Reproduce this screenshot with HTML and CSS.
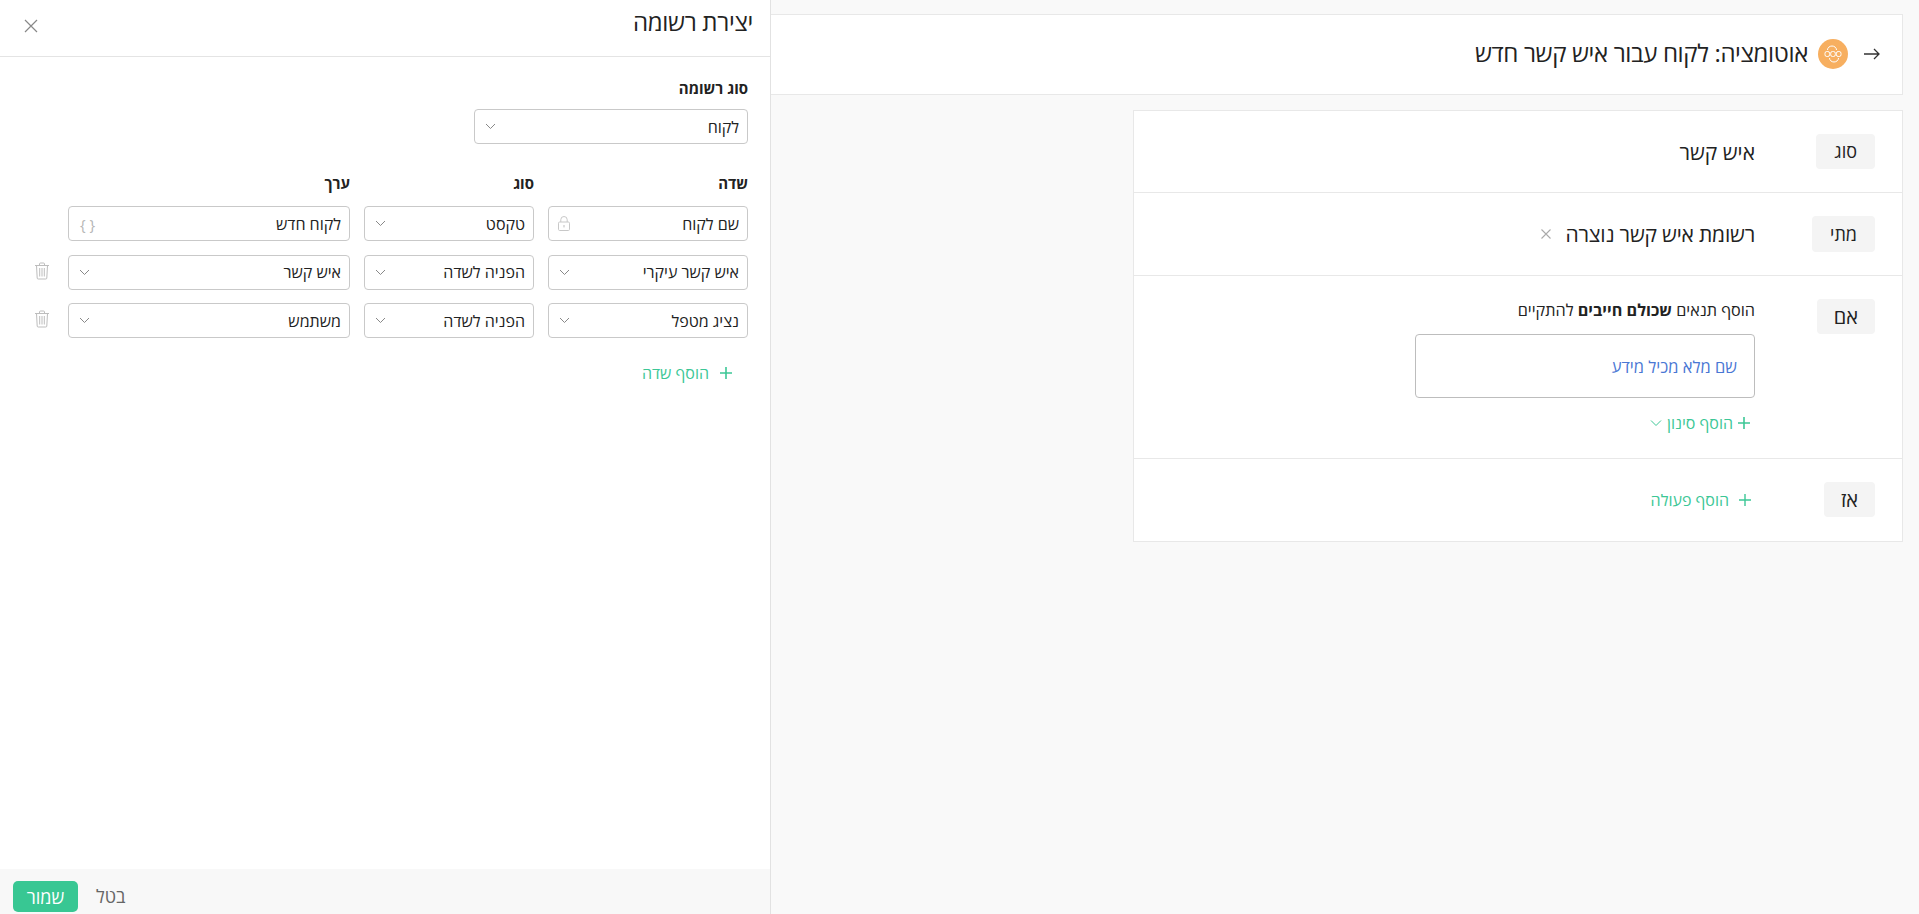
FILE: index.html
```html
<!DOCTYPE html>
<html lang="he" dir="rtl">
<head>
<meta charset="utf-8">
<title>אוטומציה</title>
<link rel="stylesheet" href="styles.css">
</head>
<body>
<div class="app">
  <main class="main">
    <header class="page-head">
      <svg class="back" width="18" height="14" viewBox="0 0 18 14"><path d="M1 7h15M11 2l5 5-5 5" fill="none" stroke="#333" stroke-width="1.3"/></svg>
      <span class="logo">
        <svg width="30" height="30" viewBox="0 0 30 30"><circle cx="15" cy="15" r="15" fill="#f7af60"/><g fill="none" stroke="#fff" stroke-width="1"><path d="M9.5 11a4.5 4 0 0 1 9 0"/><path d="M11.5 19a4.5 4 0 0 0 9 0"/><rect x="7" y="12.5" width="4.6" height="5" rx="1.8"/><rect x="12.7" y="12.5" width="4.6" height="5" rx="1.8"/><rect x="18.4" y="12.5" width="4.6" height="5" rx="1.8"/></g></svg>
      </span>
      <h1 class="page-title">אוטומציה: לקוח עבור איש קשר חדש</h1>
    </header>
    <section class="flow">
      <div class="flow-row">
        <div class="tag-col"><span class="tag">סוג</span></div>
        <div class="flow-body center"><span class="big">איש קשר</span></div>
      </div>
      <div class="flow-row">
        <div class="tag-col"><span class="tag tag-tall">מתי</span></div>
        <div class="flow-body center with-x">
          <span class="big big-tight">רשומת איש קשר נוצרה</span>
          <svg width="12" height="12" viewBox="0 0 12 12"><path d="M1.5 1.5l9 9M10.5 1.5l-9 9" stroke="#aaa" stroke-width="1.1"/></svg>
        </div>
      </div>
      <div class="flow-row row-cond">
        <div class="tag-col"><span class="tag tag-large">אם</span></div>
        <div class="flow-body">
          <p class="cond-text">הוסף תנאים <b>שכולם חייבים</b> להתקיים</p>
          <div class="cond-box"><a class="cond-link">שם מלא מכיל מידע</a></div>
          <div class="add-filter">
            <svg class="plus" width="12" height="12" viewBox="0 0 12 12"><path d="M6 0v12M0 6h12" stroke="#3cc796" stroke-width="1.6"/></svg>
            <span>הוסף סינון</span>
            <svg width="12" height="8" viewBox="0 0 12 8"><path d="M1 1.5l5 5 5-5" fill="none" stroke="#3cc796" stroke-width="1"/></svg>
          </div>
        </div>
      </div>
      <div class="flow-row row-last">
        <div class="tag-col"><span class="tag tag-large">אז</span></div>
        <div class="flow-body center">
          <div class="add-action">
            <svg class="plus" width="12" height="12" viewBox="0 0 12 12"><path d="M6 0v12M0 6h12" stroke="#3cc796" stroke-width="1.4"/></svg>
            <span>הוסף פעולה</span>
          </div>
        </div>
      </div>
    </section>
  </main>

  <aside class="panel">
    <header class="panel-head">
      <h2 class="panel-title">יצירת רשומה</h2>
      <svg class="close" width="14" height="14" viewBox="0 0 14 14"><path d="M1 1l12 12M13 1L1 13" stroke="#888" stroke-width="1.2"/></svg>
    </header>
    <div class="panel-body">
      <label class="field-label">סוג רשומה</label>
      <div class="select record-type"><span>לקוח</span><svg class="chev" width="11" height="7" viewBox="0 0 11 7"><path d="M1 1l4.5 4.5L10 1" fill="none" stroke="#888"/></svg></div>
      <div class="grid">
        <div class="col-head">שדה</div>
        <div class="col-head">סוג</div>
        <div class="col-head">ערך</div>
        <div></div>

        <div class="select lock-select"><span>שם לקוח</span>
          <svg class="lock" width="12" height="15" viewBox="0 0 12 15"><g fill="none" stroke="#c8c8c8"><rect x=".5" y="6" width="11" height="8.5" rx="1.2"/><path d="M2.8 6V3.7a3.2 3.2 0 0 1 6.4 0V6"/></g><rect x="5.4" y="9" width="1.2" height="2.4" fill="#c8c8c8"/></svg>
        </div>
        <div class="select"><span>טקסט</span><svg class="chev" width="11" height="7" viewBox="0 0 11 7"><path d="M1 1l4.5 4.5L10 1" fill="none" stroke="#888"/></svg></div>
        <div class="select value-input"><span>לקוח חדש</span><span class="braces">{ }</span></div>
        <div></div>

        <div class="select"><span>איש קשר עיקרי</span><svg class="chev" width="11" height="7" viewBox="0 0 11 7"><path d="M1 1l4.5 4.5L10 1" fill="none" stroke="#888"/></svg></div>
        <div class="select"><span>הפניה לשדה</span><svg class="chev" width="11" height="7" viewBox="0 0 11 7"><path d="M1 1l4.5 4.5L10 1" fill="none" stroke="#888"/></svg></div>
        <div class="select"><span>איש קשר</span><svg class="chev" width="11" height="7" viewBox="0 0 11 7"><path d="M1 1l4.5 4.5L10 1" fill="none" stroke="#888"/></svg></div>
        <div class="trash-cell"><svg width="16" height="18" viewBox="0 0 16 18"><g fill="none" stroke="#bdbdbd"><path d="M1 3.5h14M5.5 3.5V2a1 1 0 0 1 1-1h3a1 1 0 0 1 1 1v1.5M2.5 3.5l.7 12.5a1 1 0 0 0 1 1h7.6a1 1 0 0 0 1-1l.7-12.5M5.7 6v8.5M8 6v8.5M10.3 6v8.5"/></g></svg></div>

        <div class="select"><span>נציג מטפל</span><svg class="chev" width="11" height="7" viewBox="0 0 11 7"><path d="M1 1l4.5 4.5L10 1" fill="none" stroke="#888"/></svg></div>
        <div class="select"><span>הפניה לשדה</span><svg class="chev" width="11" height="7" viewBox="0 0 11 7"><path d="M1 1l4.5 4.5L10 1" fill="none" stroke="#888"/></svg></div>
        <div class="select"><span>משתמש</span><svg class="chev" width="11" height="7" viewBox="0 0 11 7"><path d="M1 1l4.5 4.5L10 1" fill="none" stroke="#888"/></svg></div>
        <div class="trash-cell"><svg width="16" height="18" viewBox="0 0 16 18"><g fill="none" stroke="#bdbdbd"><path d="M1 3.5h14M5.5 3.5V2a1 1 0 0 1 1-1h3a1 1 0 0 1 1 1v1.5M2.5 3.5l.7 12.5a1 1 0 0 0 1 1h7.6a1 1 0 0 0 1-1l.7-12.5M5.7 6v8.5M8 6v8.5M10.3 6v8.5"/></g></svg></div>
      </div>
      <div class="add-field">
        <svg class="plus" width="12" height="12" viewBox="0 0 12 12"><path d="M6 0v12M0 6h12" stroke="#3cc796" stroke-width="1.6"/></svg>
        <span>הוסף שדה</span>
      </div>
    </div>
    <footer class="panel-foot">
      <span class="cancel">בטל</span>
      <button class="save">שמור</button>
    </footer>
  </aside>
</div>
</body>
</html>
```
FILE: styles.css
```css
* { box-sizing: border-box; }
html, body { margin: 0; height: 100%; overflow: hidden; }
body { font-family: "Open Sans", "Noto Sans", "Liberation Sans", sans-serif; color: #222; background: #f9f9f9; font-size: 16px; }
h1, h2, p { margin: 0; font-weight: 400; }

.app { display: flex; height: 914px; }

.panel { width: 771px; flex: none; background: #fff; border-right: 1px solid #e2e2e2; display: flex; flex-direction: column; }
.panel-head { height: 57px; flex: none; border-bottom: 1px solid #e4e4e4; display: flex; justify-content: space-between; padding: 7px 17px 0 24px; }
.panel-title { font-size: 24px; line-height: 30px; letter-spacing: -0.3px; }
.close { margin-top: 12px; }
.panel-body { flex: 1; padding: 20px 22px 0 17px; }
.field-label { display: block; font-size: 15px; line-height: 22px; font-weight: 700; }
.select { height: 35px; border: 1px solid #c9c9c9; border-radius: 4px; display: flex; align-items: center; justify-content: space-between; padding: 0 8px 0 10px; background: #fff; font-size: 16px; white-space: nowrap; }
.record-type { width: 274px; margin-top: 10px; }
.grid { display: grid; grid-template-columns: 200px 170px 282px 1fr; column-gap: 14px; row-gap: 13.5px; margin-top: 28px; }
.col-head { font-size: 15px; font-weight: 700; line-height: 22px; margin-bottom: -1.5px; }
.braces { color: #b5b5b5; font-size: 15px; }
.value-input { padding-left: 11px; }
.lock-select { padding-left: 9px; }
.trash-cell { display: flex; align-items: center; padding-right: 4px; padding-bottom: 3px; }
.add-field { display: flex; align-items: center; gap: 11px; color: #3cc796; margin-top: 24px; padding-right: 16px; line-height: 22px; }
.panel-foot { height: 45px; flex: none; background: #f8f8f8; display: flex; justify-content: flex-end; align-items: flex-start; gap: 18px; padding: 12px 0 0 13px; font-size: 18px; }
.cancel { color: #666; line-height: 31px; }
.save { width: 65px; height: 31px; border: 0; border-radius: 5px; background: #38c793; color: #fff; font: inherit; }

.main { flex: 1; min-width: 0; padding: 14px 16px 0 0; display: flex; flex-direction: column; gap: 15px; }
.page-head { height: 81px; flex: none; background: #fff; border: 1px solid #e8e8e8; border-left: 0; display: flex; align-items: center; padding: 0 21px 1px 0; }
.back { flex: none; }
.logo { width: 30px; height: 30px; margin-right: 15px; display: flex; }
.page-title { font-size: 24px; letter-spacing: -0.35px; margin: 0 10px 3px 0; white-space: nowrap; }

.flow { width: 770px; background: #fff; border: 1px solid #e8e8e8; }
.flow-row { display: flex; padding: 23px 27px 23px 0; border-bottom: 1px solid #e8e8e8; }
.row-cond { padding-bottom: 24px; }
.row-last { padding-bottom: 24px; border-bottom: 0; }
.tag-col { width: 120px; flex: none; display: flex; justify-content: flex-start; align-items: flex-start; }
.tag { height: 35px; background: #f4f4f4; border-radius: 4px; padding: 0 18px; font-size: 18px; line-height: 35px; }
.tag-tall { height: 36px; line-height: 36px; padding: 0 18px; }
.tag-large { font-size: 20px; padding: 0 17px; }
.flow-body { flex: 1; min-width: 0; }
.center { display: flex; align-items: center; }
.with-x { gap: 14px; }
.big { font-size: 21px; white-space: nowrap; }
.big-tight { letter-spacing: -0.2px; }
.cond-text { font-size: 16.2px; line-height: 22px; white-space: nowrap; }
.cond-box { width: 340px; height: 64px; margin-top: 13px; border: 1px solid #bdbdbd; border-radius: 4px; display: flex; align-items: center; padding-right: 17px; }
.cond-link { color: #4a77d4; font-size: 16.5px; }
.add-filter { display: flex; align-items: center; gap: 5px; margin-top: 14px; padding-right: 5px; color: #3cc796; font-size: 16px; line-height: 22px; }
.add-action { display: flex; align-items: center; gap: 10px; padding-right: 4px; color: #3cc796; font-size: 16px; }
```
